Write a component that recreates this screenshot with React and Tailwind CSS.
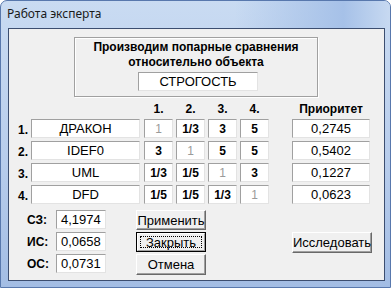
import React from "react";

const rows = [
  { n: "1.", name: "ДРАКОН", cells: ["1", "1/3", "3", "5"], p: "0,2745" },
  { n: "2.", name: "IDEF0", cells: ["3", "1", "5", "5"], p: "0,5402" },
  { n: "3.", name: "UML", cells: ["1/3", "1/5", "1", "3"], p: "0,1227" },
  { n: "4.", name: "DFD", cells: ["1/5", "1/5", "1/3", "1"], p: "0,0623" },
];

const stats = [
  { label: "СЗ:", value: "4,1974" },
  { label: "ИС:", value: "0,0658" },
  { label: "ОС:", value: "0,0731" },
];

const edit =
  "bg-white border border-t-[#a0a0a0] border-l-[#a0a0a0] border-r-[#e3e3e3] border-b-[#e3e3e3] flex items-center justify-center";

const Button = ({ children, isDefault, className = "" }) => {
  if (isDefault) {
    return (
      <div className={"border border-black bg-[#f0f0f0] " + className}>
        <div className="w-full h-full border border-t-white border-l-white border-r-[#a0a0a0] border-b-[#a0a0a0] p-[2px]">
          <div className="w-full h-full border border-dotted border-black flex items-center justify-center leading-none">
            {children}
          </div>
        </div>
      </div>
    );
  }
  return (
    <div
      className={
        "bg-[#f0f0f0] border border-t-white border-l-white border-r-[#696969] border-b-[#696969] shadow-[inset_-1px_-1px_0_#a0a0a0] flex items-center justify-center leading-none " +
        className
      }
    >
      {children}
    </div>
  );
};

export default function App() {
  return (
    <div
      className="w-[391px] h-[288px] bg-white text-black"
      style={{ fontFamily: '"Liberation Sans", Arial, sans-serif' }}
    >
      <div className="w-full h-full rounded-t-[7px] border border-[#5878ad] bg-[linear-gradient(to_bottom,#c9dbf2,#b8cdec_55%,#a3bde4)] flex flex-col">
        <div className="h-[27px] flex items-center pl-[6px] bg-[linear-gradient(to_right,transparent_60%,#a6c1e8_88%,#c7d9f1)] rounded-t-[6px]">
          <span className="text-[12px] text-[#1a1a1a] pb-[1px]" style={{ fontFamily: '"Noto Sans", sans-serif' }}>
            Работа эксперта
          </span>
        </div>
        <div className="ml-[7px] w-[377px] h-[253px] border border-[#3c4e70] bg-[#f0f0f0] flex flex-col">
          <div className="ml-[65px] mt-[8px] w-[244px] h-[60px] border border-[#a0a0a0] shadow-[inset_1px_1px_0_#fff,1px_1px_0_#fff] flex flex-col items-center pt-[2px]">
            <div className="text-[12px] font-bold leading-[15px]">Производим попарные сравнения</div>
            <div className="text-[12px] font-bold leading-[15px]">относительно объекта</div>
            <div className={edit + " ml-[4px] mt-[2px] w-[120px] h-[19px] text-[13px]"}>СТРОГОСТЬ</div>
          </div>

          <div className="flex mt-[4px] h-[15px] items-center text-[12px] font-bold">
            <div className="ml-[135px] flex gap-[3px]">
              {["1.", "2.", "3.", "4."].map((h) => (
                <div key={h} className="w-[29px] text-center">{h}</div>
              ))}
            </div>
            <div className="ml-[23px] w-[78px] text-center">Приоритет</div>
          </div>

          <div className="flex flex-col gap-[3px] mt-[3px]">
            {rows.map((r, ri) => (
              <div key={r.n} className="flex h-[19px] items-center">
                <div className="ml-[9px] w-[13px] text-[12px] font-bold pt-[2px]">{r.n}</div>
                <div className={edit + " w-[109px] h-full text-[13px]"}>{r.name}</div>
                <div className="ml-[4px] flex gap-[3px] h-full">
                  {r.cells.map((c, ci) => (
                    <div
                      key={ci}
                      className={
                        edit +
                        " w-[29px] h-full text-[12px] " +
                        (ci === ri ? "text-[#9a9a9a]" : "font-bold")
                      }
                    >
                      {c}
                    </div>
                  ))}
                </div>
                <div className={edit + " ml-[23px] w-[78px] h-full text-[13px]"}>{r.p}</div>
              </div>
            ))}
          </div>

          <div className="flex mt-[6px] text-[13px]">
            <div className="ml-[18px] flex flex-col gap-[3px]">
              {stats.map((s) => (
                <div key={s.label} className="flex items-center h-[19px]">
                  <div className="w-[29px] text-[12px] font-bold">{s.label}</div>
                  <div className={edit + " w-[50px] h-full !justify-start pl-[4px]"}>{s.value}</div>
                </div>
              ))}
            </div>
            <div className="ml-[30px] flex flex-col gap-[2px]">
              <Button className="w-[70px] h-[20px]">Применить</Button>
              <Button isDefault className="w-[70px] h-[20px]">Закрыть</Button>
              <Button className="w-[70px] h-[21px]">Отмена</Button>
            </div>
            <Button className="ml-[86px] mt-[22px] w-[80px] h-[21px]">Исследовать</Button>
          </div>
        </div>
      </div>
    </div>
  );
}
